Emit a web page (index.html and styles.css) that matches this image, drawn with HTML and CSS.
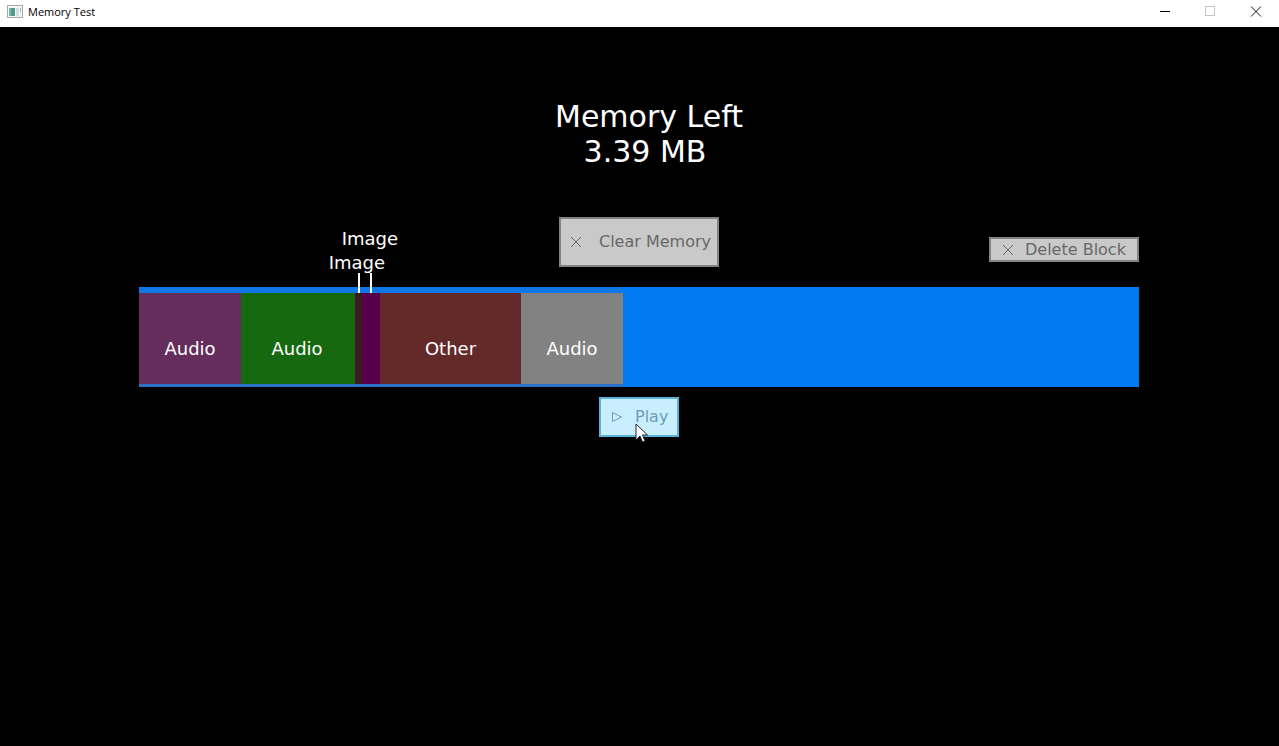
FILE: index.html
```html
<!DOCTYPE html>
<html lang="en">
<head>
<meta charset="utf-8">
<title>Memory Test</title>
<link rel="stylesheet" href="styles.css">
</head>
<body>
<header class="titlebar">
  <svg class="app-icon" viewBox="0 0 16 14" aria-hidden="true">
    <rect x="0.5" y="0.5" width="15" height="12" fill="#f4f6f6" stroke="#a3a9b0"/>
    <rect x="2" y="3" width="6" height="8" fill="#4f9a88"/>
    <rect x="2" y="3" width="2" height="8" fill="#7fb5a8"/>
    <rect x="9" y="3" width="3" height="8" fill="#d3dfdd"/>
    <rect x="13" y="3" width="1" height="4" fill="#a9bbb9"/>
  </svg>
  <span class="window-title">Memory Test</span>
  <div class="window-controls">
    <button class="window-button" aria-label="Minimize"><svg viewBox="0 0 12 12"><path d="M2 5.500h10" stroke="#000"/></svg></button>
    <button class="window-button" aria-label="Maximize" disabled><svg viewBox="0 0 12 12"><rect x="1.5" y="0.5" width="9" height="9" fill="none" stroke="#c4c4c4"/></svg></button>
    <button class="window-button" aria-label="Close"><svg viewBox="0 0 12 12"><path d="M1 0.500l10 10M11 0.500L1 10.500" stroke="#111"/></svg></button>
  </div>
</header>
<main class="stage">
  <section class="summary">
    <h1 class="summary-title">Memory Left</h1>
    <p class="summary-value">3.39 MB</p>
  </section>
  <div class="actions">
    <button class="button button-clear"><svg class="icon" viewBox="0 0 12 12" aria-hidden="true"><path d="M1 1l10 10M11 1L1 11"/></svg><span>Clear Memory</span></button>
    <button class="button button-delete"><svg class="icon" viewBox="0 0 12 12" aria-hidden="true"><path d="M1 1l10 10M11 1L1 11"/></svg><span>Delete Block</span></button>
  </div>
  <div class="memory">
    <div class="block violet" style="width:10.2%">Audio</div>
    <div class="block green" style="width:11.4%">Audio</div>
    <div class="block maroon" style="width:0.7%"><span class="callout callout-low">Image</span><i class="lead"></i></div>
    <div class="block purple" style="width:1.8%"><span class="callout callout-high">Image</span><i class="lead"></i></div>
    <div class="block brown" style="width:14.1%">Other</div>
    <div class="block gray" style="width:10.2%">Audio</div>
  </div>
  <button class="button button-play"><svg class="icon" viewBox="0 0 12 12" aria-hidden="true"><path d="M1.5 1.5v9l9-4.5z"/></svg><span>Play</span>
    <svg class="cursor" viewBox="0 0 13 20" aria-hidden="true"><path d="M1 1v16l4-4 2.500 6 2.500-1-2.500-6h5z" fill="#fff" stroke="#223"/></svg>
  </button>
</main>
</body>
</html>
```
FILE: styles.css
```css
* { box-sizing: border-box; }

body {
  margin: 0;
  min-height: 100vh;
  display: flex;
  flex-direction: column;
  background: #000;
  font-family: "DejaVu Sans", sans-serif;
}

button { font: inherit; }

.titlebar {
  display: flex;
  align-items: center;
  height: 27px;
  padding: 0 0 4px 7px;
  background: #fff;
  color: #000;
}

.app-icon { width: 16px; height: 14px; }

.window-title {
  margin-left: 5px;
  font: 11px/16px "Open Sans", "Noto Sans", sans-serif;
}

.window-controls { display: flex; margin-left: auto; }

.window-button {
  display: flex;
  align-items: center;
  justify-content: center;
  width: 46px;
  height: 22px;
  padding: 0;
  border: 0;
  background: none;
}

.window-button svg { width: 12px; height: 12px; }

.stage {
  flex: 1;
  display: flex;
  flex-direction: column;
  padding: 72px 140px 0 139px;
  color: #fff;
}

.summary {
  text-align: center;
  font-size: 30px;
  line-height: 35px;
}

.summary-title {
  margin: 0;
  padding-left: 20px;
  font: inherit;
}

.summary-value { margin: 0; padding-left: 12px; }

.actions {
  display: grid;
  grid-template-columns: 1fr auto 1fr;
  align-items: end;
  margin-top: 48px;
}

.button {
  display: flex;
  align-items: center;
  padding: 0;
  border: 2px solid #838383;
  background: #c9c9c9;
  color: #686868;
  font-size: 16px;
  line-height: 20px;
  white-space: nowrap;
}

.icon {
  flex: none;
  width: 12px;
  height: 12px;
  fill: none;
  stroke: currentColor;
}

.button-clear {
  grid-column: 2;
  width: 160px;
  height: 50px;
  padding-left: 9px;
  gap: 17px;
}

.button-delete {
  grid-column: 3;
  justify-self: end;
  width: 150px;
  height: 25px;
  margin-bottom: 5px;
  padding-left: 11px;
  gap: 11px;
}

.memory {
  display: flex;
  height: 100px;
  margin-top: 20px;
  background: #0079f1;
}

.block {
  position: relative;
  display: flex;
  align-items: center;
  justify-content: center;
  padding-top: 20px;
  border-top: 6px solid #1077e6;
  border-bottom: 3px solid #2a70c8;
  font-size: 18px;
  line-height: 20px;
}

.violet { background-color: #652d5c; }
.green { padding-right: 2px; background-color: #16690f; }
.maroon { background-color: #3b1a22; }
.purple { background-color: #57004a; }
.brown { background-color: #632a29; }
.gray { background-color: #828282; }

.callout { position: absolute; }
.callout-low { right: -23px; bottom: 111px; }
.callout-high { right: -18px; bottom: 135px; }

.lead {
  position: absolute;
  bottom: 100%;
  left: calc(50% - 1px);
  width: 2px;
  height: 20px;
  background: #fff;
}

.button-play {
  position: relative;
  align-self: center;
  width: 80px;
  height: 40px;
  margin-top: 10px;
  padding-left: 10px;
  gap: 12px;
  border-color: #5bb2d9;
  background: #c9effe;
  color: #6c9bbc;
}

.cursor {
  position: absolute;
  left: 34px;
  top: 24px;
  width: 13px;
  height: 20px;
}
```
